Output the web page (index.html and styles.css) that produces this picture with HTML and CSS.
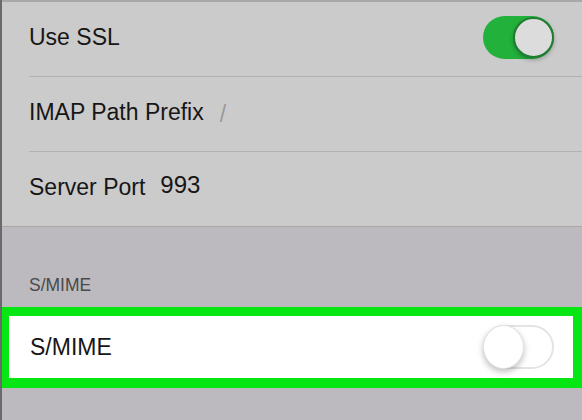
FILE: index.html
```html
<!DOCTYPE html>
<html>
<head>
<meta charset="utf-8">
<link rel="stylesheet" href="styles.css">
</head>
<body>
<div class="screen">
  <div class="group">
    <div class="row sep">
      <span class="label">Use SSL</span>
      <span class="switch on"><span class="knob"></span></span>
    </div>
    <div class="row sep">
      <span class="label">IMAP Path Prefix</span>
      <span class="value slash">/</span>
    </div>
    <div class="row">
      <span class="label">Server Port</span>
      <span class="value port">993</span>
    </div>
  </div>
  <div class="section-header">S/MIME</div>
  <div class="highlight">
    <div class="row white">
      <span class="label">S/MIME</span>
      <span class="switch off"><span class="knob"></span></span>
    </div>
  </div>
  <div class="rest"></div>
</div>
</body>
</html>
```
FILE: styles.css
```css
* { box-sizing: border-box; }
html, body { margin: 0; padding: 0; }
body {
  font-family: "Liberation Sans", Arial, sans-serif;
  background: #bcbabe;
}
.screen {
  width: 582px;
  height: 420px;
  overflow: hidden;
  border-left: 2px solid #6a6a6a;
  background: #bcbabe;
  display: flex;
  flex-direction: column;
}
.group {
  background: #cbcbcb;
  border-top: 2px solid #a8a8aa;
  border-bottom: 1px solid #a9a8ab;
  padding-left: 27px;
}
.row {
  height: 75px;
  display: flex;
  align-items: center;
  padding-right: 28px;
  padding-bottom: 3px;
}
.group .row:last-child { height: 74px; }
.row.sep { border-bottom: 1px solid #b2b2b2; }
.label {
  font-size: 23px;
  color: #161616;
  flex: 0 0 auto;
}
.value {
  font-size: 23px;
  margin-left: 15px;
}
.slash { color: #9a9a9a; position: relative; top: 2px; margin-left: 16px; }
.port { color: #161616; font-size: 24px; position: relative; top: -3px; }
.switch {
  margin-left: auto;
  width: 71px;
  height: 43px;
  border-radius: 22px;
  position: relative;
  flex: 0 0 auto;
}
.switch.on {
  background: #22b13b;
}
.switch.on .knob {
  position: absolute;
  right: 0;
  top: 1px;
  width: 41px;
  height: 41px;
  border-radius: 50%;
  background: #dcdcdc;
  border: 2px solid #1f7d33;
  box-shadow: 0 2px 4px rgba(0,0,0,0.25);
}
.switch.off {
  background: #ffffff;
  border: 2px solid #e4e4e4;
  height: 44px;
}
.switch.off .knob {
  position: absolute;
  left: -2px;
  top: -2px;
  width: 41px;
  height: 44px;
  border-radius: 50%;
  background: #ffffff;
  border: 1px solid #e2e2e2;
  box-shadow: 0 3px 6px rgba(0,0,0,0.25);
}
.section-header {
  height: 80px;
  padding-left: 27px;
  padding-bottom: 11px;
  display: flex;
  align-items: flex-end;
  font-size: 17.5px;
  color: #4a4a4a;
}
.highlight {
  margin-left: -2px;
  border: 9px solid #05e612;
  border-bottom-width: 10px;
  background: #ffffff;
}
.row.white {
  height: 62px;
  padding-left: 21px;
  padding-right: 19px;
  padding-bottom: 0;
  background: #ffffff;
}
.rest { flex: 1; background: #bcbabe; }
```
